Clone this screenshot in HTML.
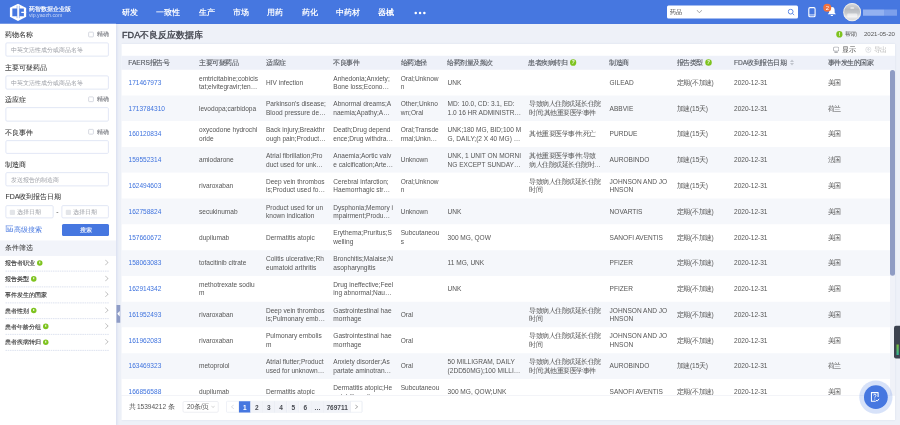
<!DOCTYPE html>
<html><head><meta charset="utf-8">
<style>
*{box-sizing:border-box;margin:0;padding:0}
html,body{width:900px;height:425px;overflow:hidden;background:#eef0f8;font-family:"Liberation Sans",sans-serif;color:#555}
.abs{position:absolute}
#hdr{position:absolute;left:0;top:0;width:900px;height:23.75px;background:#4677e0;box-shadow:inset 0 -0.75px 0 #3b6ddc}
#hdr .nav{position:absolute;top:0.5px;height:23.75px;line-height:23.75px;font-size:8px;color:#fff;font-weight:bold;white-space:nowrap}
#logo-t1{position:absolute;left:29px;top:5px;font-size:6px;line-height:8px;color:#fff;font-weight:bold;white-space:nowrap}
#logo-t2{position:absolute;left:29px;top:12.2px;font-size:5.2px;line-height:6px;color:rgba(255,255,255,.68);white-space:nowrap}
#srch{position:absolute;left:667px;top:5.6px;width:131px;height:12.8px;background:#fff;border-radius:1.5px}
#srch span{position:absolute;left:3px;top:0;line-height:12.8px;font-size:6px;color:#333}
#side{position:absolute;left:0;top:23.75px;width:116px;height:402px;background:#fff;box-shadow:0.5px 0 2.5px rgba(90,110,200,.16)}
.lbl{position:absolute;left:5.4px;font-size:7px;line-height:10px;margin-top:0.4px;color:#333;-webkit-text-stroke:0.05px #333;white-space:nowrap}
.chk{position:absolute;left:88.3px;width:5.4px;height:5.4px;border:0.75px solid #c9ced8;border-radius:1px;background:#fff}
.jq{position:absolute;left:97px;font-size:6.1px;line-height:8px;color:#85878d;-webkit-text-stroke:0.1px #85878d;white-space:nowrap}
.inp{position:absolute;left:5.4px;width:103.3px;height:14.1px;border:0.75px solid #d8dff2;border-radius:1.5px;background:#fff}
.inp span{position:absolute;left:5px;top:0.3px;line-height:12.6px;font-size:6.08px;color:#9c9fa6;white-space:nowrap}
.item{position:absolute;left:0;width:116px;height:15.85px}
.item span{position:absolute;left:5.4px;top:0;line-height:15.85px;font-size:6.1px;color:#333;-webkit-text-stroke:0.12px #333;white-space:nowrap}
.item:after{content:"";position:absolute;left:5.4px;right:7.3px;bottom:-0.6px;border-bottom:0.75px dashed #d2d8ea}
.qi{display:inline-block;position:relative;margin-left:1.5px;vertical-align:-0.8px;width:5.6px;height:5.6px;border-radius:50%;background:#7ec31f}
.qi:after{content:"";position:absolute;left:2.3px;top:1.2px;width:1px;height:2px;background:#fff}
.arr{position:absolute;left:103.5px;top:5.6px;width:4px;height:4px;border-right:0.7px solid #999;border-top:0.7px solid #999;transform:rotate(45deg)}
#main-title{position:absolute;left:122px;top:28px;font-size:9.1px;line-height:13px;color:#3a3d46;-webkit-text-stroke:0.3px #3a3d46;white-space:nowrap}
#card{position:absolute;left:121.5px;top:44px;width:773.5px;height:376px;background:#fff;box-shadow:0 0 2px rgba(160,170,200,.25)}
#thead{position:absolute;left:0;top:11.8px;width:773.5px;height:13.9px;background:#eef1f9}
.th{position:absolute;top:0;line-height:13.9px;font-size:6.6px;color:#54585f;-webkit-text-stroke:0.12px #54585f;white-space:nowrap}
.hq{display:inline-block;position:relative;width:6.4px;height:6.4px;border-radius:50%;background:#7ec31f;vertical-align:-0.9px;margin-left:2.6px;-webkit-text-stroke:0}
.hq:after{content:"?";position:absolute;left:0;top:0;width:6.4px;line-height:6.4px;text-align:center;font-size:4.6px;font-weight:bold;color:#fff}
.sorti{display:inline-block;position:relative;width:4.4px;height:7px;margin-left:3.8px;vertical-align:-1.2px}
.sorti:before{content:"";position:absolute;left:0;top:0.5px;border-left:2.2px solid transparent;border-right:2.2px solid transparent;border-bottom:2.6px solid #c0c4cc}
.sorti:after{content:"";position:absolute;left:0;top:3.9px;border-left:2.2px solid transparent;border-right:2.2px solid transparent;border-top:2.6px solid #c0c4cc}
.row{position:absolute;left:0;width:768.5px;height:25.78px;background:#fff}
.row.s{background:#f5f7fb}
.c{position:absolute;top:0;height:25.78px;display:flex;align-items:center;font-size:6.55px;line-height:8.6px;color:#555;white-space:nowrap}
.c.id{color:#3f73de}
#tbody{position:absolute;left:0;top:25.7px;width:773.5px;height:325.3px;overflow:hidden}
#tbody .row{margin:0}
#sbar{position:absolute;left:768.6px;top:0.3px;width:4.9px;height:205.7px;border-radius:2.5px;background:#8f9cc4}
#strack{position:absolute;left:768.6px;top:0px;width:4.9px;height:325.5px;background:#f0f2f8}
#tline{position:absolute;left:0;top:351.5px;width:773.5px;height:0.6px;background:#e6e9f0}
.pg{position:absolute;top:357.3px;height:11.1px;line-height:12.4px;font-size:6.5px;text-align:center;color:#484b52;background:#f1f3f8;font-weight:bold;box-shadow:inset -0.5px 0 0 #e2e6f0}
#blurw{position:absolute;left:0;top:0;width:900px;height:425px;overflow:hidden;filter:blur(0.3px)}
#wrap{position:absolute;left:0;top:0;width:3600px;height:1700px;transform:scale(0.25);transform-origin:0 0;overflow:hidden}
#page{position:absolute;left:0;top:0;width:900px;height:425px;zoom:4;background:#eef1f8;overflow:hidden}
</style></head><body><div id="blurw"><div id="wrap"><div id="page">
<div id="hdr">
  <svg class="abs" style="left:9.6px;top:3.5px" width="16.8" height="17.8" viewBox="0 0 160 180" preserveAspectRatio="none">
    <path d="M81 3 L160 45 L160 135 L81 177 L3 135 L3 43 Z" fill="#fff"/>
    <path d="M27 50 L72 50 L72 128 L27 128 Z" fill="#4677e0"/>
    <path d="M72 22 V148 M94 22 V148" stroke="#4677e0" stroke-width="4.5"/>
    <path d="M94 50 L137 50 L137 130 L94 130 Z" fill="#4677e0"/>
    <path d="M112 84 L160 84 L160 97 L112 97 Z" fill="#fff"/>
  </svg>
  <div id="logo-t1">药智数据企业版</div>
  <div id="logo-t2">vip.yaozh.com</div>
  <div class="nav" style="left:121.6px">研发</div>
  <div class="nav" style="left:156.2px">一致性</div>
  <div class="nav" style="left:198.9px">生产</div>
  <div class="nav" style="left:233.2px">市场</div>
  <div class="nav" style="left:267px">用药</div>
  <div class="nav" style="left:301.6px">药化</div>
  <div class="nav" style="left:336.4px">中药材</div>
  <div class="nav" style="left:378.4px">器械</div>
  <div class="abs" style="left:414.6px;top:11.8px;width:2.4px;height:2.4px;border-radius:50%;background:#fff;box-shadow:4.3px 0 0 #fff,8.6px 0 0 #fff"></div>
  <div id="srch"><span>药品</span>
    <div class="abs" style="left:30.4px;top:3px;width:3.75px;height:3.75px;border-right:0.6px solid #888;border-bottom:0.6px solid #888;transform:rotate(45deg)"></div>
    <svg class="abs" style="left:120.5px;top:2.9px" width="7.5" height="7" viewBox="0 0 15 14"><circle cx="6.3" cy="6.3" r="4.8" stroke="#4677e0" stroke-width="1.7" fill="none"/><path d="M10 10 L13.5 13.3" stroke="#4677e0" stroke-width="1.7"/></svg>
  </div>
  <svg class="abs" style="left:808px;top:7px" width="8" height="10.6" viewBox="0 0 16 21"><rect x="1.6" y="1.2" width="12.6" height="18.4" rx="2.6" stroke="#fff" stroke-width="2.2" fill="none"/><path d="M2 15.8 H14" stroke="#fff" stroke-width="1.6"/></svg>
  <svg class="abs" style="left:827.3px;top:6.4px" width="9.2" height="10" viewBox="0 0 18 20"><path d="M9 1.2 C4.6 1.2 3.4 4.6 3.4 8 L3.4 12.6 L0.8 15.6 L17.2 15.6 L14.6 12.6 L14.6 8 C14.6 4.6 13.4 1.2 9 1.2 Z" fill="#fff"/><path d="M6.6 16.8 a2.4 2.4 0 0 0 4.8 0 Z" fill="#fff"/></svg>
  <div class="abs" style="left:823.3px;top:3.7px;width:8px;height:8px;border-radius:50%;background:#f0713f;color:#fff;font-size:5.8px;line-height:8.2px;text-align:center">2</div>
  <div class="abs" style="left:843.2px;top:2.9px;width:17.8px;height:18.4px;border-radius:50%;background:linear-gradient(#d9dbde 0%,#b8bbc0 35%,#c4c7cb 55%,#e6e7e9 75%,#d3d5d8 100%);box-shadow:inset 0 0 0 0.9px #ececec;overflow:hidden">
    <div class="abs" style="left:4px;top:10.5px;width:10px;height:4px;border-radius:1px;background:rgba(255,255,255,.55)"></div>
    <div class="abs" style="left:7px;top:4px;width:4px;height:2px;border-radius:1px;background:rgba(255,255,255,.5)"></div>
  </div>
  <div class="abs" style="left:863px;top:9.6px;width:21px;height:6.1px;background:#93b1f0"></div><div class="abs" style="left:884px;top:9.6px;width:13px;height:6.1px;background:#7c9feb"></div>
</div>

<div id="side">
  <div class="lbl" style="top:5.7px">药物名称</div>
  <div class="chk" style="top:8px"></div><div class="jq" style="top:6.5px">精确</div>
  <div class="inp" style="top:18.65px"><span>中英文活性成分或商品名等</span></div>
  <div class="lbl" style="top:38.3px">主要可疑药品</div>
  <div class="inp" style="top:51.75px"><span>中英文活性成分或商品名等</span></div>
  <div class="lbl" style="top:70.5px">适应症</div>
  <div class="chk" style="top:72.8px"></div><div class="jq" style="top:71.3px">精确</div>
  <div class="inp" style="top:83.55px"></div>
  <div class="lbl" style="top:103px">不良事件</div>
  <div class="chk" style="top:105.3px"></div><div class="jq" style="top:103.8px">精确</div>
  <div class="inp" style="top:116.45px;height:13.6px"></div>
  <div class="lbl" style="top:135.2px">制造商</div>
  <div class="inp" style="top:148.45px"><span>发送报告的制造商</span></div>
  <div class="lbl" style="top:167.5px">FDA收到报告日期</div>
  <div class="inp" style="top:181.45px;width:48px;height:13.1px"><span style="left:10.5px;line-height:12px">选择日期</span><i class="abs" style="left:3.5px;top:3.7px;width:5.4px;height:5.4px;background:#e3e5e9;border-radius:1px"></i></div>
  <div class="abs" style="left:56.4px;top:188.6px;width:1.8px;height:0.7px;background:#777"></div>
  <div class="inp" style="top:181.45px;left:61.4px;width:47.3px;height:13.1px"><span style="left:10.5px;line-height:12px">选择日期</span><i class="abs" style="left:3.5px;top:3.7px;width:5.4px;height:5.4px;background:#e3e5e9;border-radius:1px"></i></div>
  <div class="abs" style="left:5.4px;top:201px;font-size:7px;line-height:9px;color:#4677e0;white-space:nowrap"><svg style="display:inline-block;vertical-align:-0.6px;margin-right:0.8px" width="7.6" height="6.8" viewBox="0 0 76 68"><path d="M0 5 H76 M6 5 V64 H70 V30 M24 22 V50 H52 V22" stroke="#4677e0" stroke-width="7" fill="none"/><path d="M30 34 L38 42 L46 34" stroke="#4677e0" stroke-width="6" fill="none"/></svg>高级搜索</div>
  <div class="abs" style="left:62.1px;top:200.25px;width:46.9px;height:12px;border-radius:1.5px;background:#4677e0;color:#fff;font-size:6px;line-height:12px;text-align:center;-webkit-text-stroke:0.1px #fff">搜索</div>
  <div class="abs" style="left:0;top:216.85px;width:116px;height:15.3px;background:#f2f4fa"><span class="abs" style="left:5.4px;top:-0.8px;line-height:15.3px;font-size:7px;color:#333">条件筛选</span></div>
  <div class="item" style="top:231.25px"><span>报告者职业<i class="qi"></i></span><b class="arr"></b></div><div class="item" style="top:247.10px"><span>报告类型<i class="qi"></i></span><b class="arr"></b></div><div class="item" style="top:262.95px"><span>事件发生的国家</span><b class="arr"></b></div><div class="item" style="top:278.80px"><span>患者性别<i class="qi"></i></span><b class="arr"></b></div><div class="item" style="top:294.65px"><span>患者年龄分组<i class="qi"></i></span><b class="arr"></b></div><div class="item" style="top:310.50px"><span>患者疾病转归<i class="qi"></i></span><b class="arr"></b></div>
</div>
<div class="abs" style="left:116.5px;top:304.9px;width:3.8px;height:17.9px;background:#8e9cc6"><i class="abs" style="left:0.7px;top:6.1px;width:0;height:0;border-top:2.8px solid transparent;border-bottom:2.8px solid transparent;border-right:2.7px solid #fff"></i></div>

<div id="main-title">FDA不良反应数据库</div>
<div class="abs" style="left:836.2px;top:31.1px;width:6.4px;height:6.4px;border-radius:50%;background:#7ec31f"><i class="abs" style="left:2.75px;top:1.2px;width:0.9px;height:2.4px;background:#fff"></i><i class="abs" style="left:2.75px;top:4.1px;width:0.9px;height:0.9px;background:#fff"></i></div>
<div class="abs" style="left:845.3px;top:30px;font-size:6.1px;line-height:8px;color:#555;white-space:nowrap">帮助</div>
<div class="abs" style="left:863.9px;top:30px;font-size:6.08px;line-height:8px;color:#555;white-space:nowrap">2021-05-20</div>

<div id="card">
  <svg class="abs" style="left:711.4px;top:2.6px" width="6.2" height="6.4" viewBox="0 0 12 12.4"><rect x="0.9" y="0.9" width="10.2" height="8.2" rx="2.6" stroke="#8a8d94" stroke-width="1.3" fill="none"/><path d="M2.8 11.4 h6.4" stroke="#8a8d94" stroke-width="1.5"/></svg>
  <div class="abs" style="left:720.9px;top:1px;font-size:6.6px;line-height:9px;color:#555;white-space:nowrap">显示</div>
  <svg class="abs" style="left:743.8px;top:2.6px" width="6.2" height="6.4" viewBox="0 0 12 12.4"><circle cx="6" cy="6.2" r="5.3" stroke="#c3c6cc" stroke-width="1" fill="none"/><path d="M3.3 6.6 L6 3.6 L8.7 6.6" stroke="#c3c6cc" stroke-width="1" fill="none"/><path d="M6 3.8 V9" stroke="#c3c6cc" stroke-width="1"/></svg>
  <div class="abs" style="left:752.4px;top:1px;font-size:6.6px;line-height:9px;color:#bbb;white-space:nowrap">导出</div>
  <div id="thead">
    <div class="th" style="left:6.8px">FAERS报告号</div>
    <div class="th" style="left:77.5px">主要可疑药品</div>
    <div class="th" style="left:144.5px">适应症</div>
    <div class="th" style="left:211.8px">不良事件</div>
    <div class="th" style="left:279.2px">给药途径</div>
    <div class="th" style="left:325.8px">给药剂量及频次</div>
    <div class="th" style="left:406.8px">患者疾病转归<i class="hq"></i></div>
    <div class="th" style="left:487.8px">制造商</div>
    <div class="th" style="left:555.2px">报告类型<i class="hq"></i></div>
    <div class="th" style="left:612.5px">FDA收到报告日期<i class="sorti"></i></div>
    <div class="th" style="left:706.2px">事件发生的国家</div>
  </div>
  <div id="tbody">
<div class="row" style="top:0.00px"><div class="c id" style="left:7.00px"><div>171467973</div></div><div class="c" style="left:77.50px"><div>emtricitabine;cobicis<br>tat;elvitegravir;ten…</div></div><div class="c" style="left:144.50px"><div>HIV infection</div></div><div class="c" style="left:211.80px"><div>Anhedonia;Anxiety;<br>Bone loss;Econo…</div></div><div class="c" style="left:279.20px"><div>Oral;Unknow<br>n</div></div><div class="c" style="left:326.10px"><div>UNK</div></div><div class="c" style="left:488.10px"><div>GILEAD</div></div><div class="c" style="left:555.40px"><div>定期(不加速)</div></div><div class="c" style="left:612.50px"><div>2020-12-31</div></div><div class="c" style="left:706.40px"><div>美国</div></div></div>
<div class="row s" style="top:25.78px"><div class="c id" style="left:7.00px"><div>1713784310</div></div><div class="c" style="left:77.50px"><div>levodopa;carbidopa</div></div><div class="c" style="left:144.50px"><div>Parkinson's disease;<br>Blood pressure de…</div></div><div class="c" style="left:211.80px"><div>Abnormal dreams;A<br>naemia;Apathy;A…</div></div><div class="c" style="left:279.20px"><div>Other;Unkno<br>wn;Oral</div></div><div class="c" style="left:326.10px"><div>MD: 10.0, CD: 3.1, ED:<br>1.0 16 HR ADMINISTR…</div></div><div class="c" style="left:407.50px"><div>导致病人住院或延长住院<br>时间;其他重要医学事件</div></div><div class="c" style="left:488.10px"><div>ABBVIE</div></div><div class="c" style="left:555.40px"><div>加速(15天)</div></div><div class="c" style="left:612.50px"><div>2020-12-31</div></div><div class="c" style="left:706.40px"><div>荷兰</div></div></div>
<div class="row" style="top:51.56px"><div class="c id" style="left:7.00px"><div>160120834</div></div><div class="c" style="left:77.50px"><div>oxycodone hydrochl<br>oride</div></div><div class="c" style="left:144.50px"><div>Back injury;Breakthr<br>ough pain;Product…</div></div><div class="c" style="left:211.80px"><div>Death;Drug depend<br>ence;Drug withdra…</div></div><div class="c" style="left:279.20px"><div>Oral;Transde<br>rmal;Unkn…</div></div><div class="c" style="left:326.10px"><div>UNK;180 MG, BID;100 M<br>G, DAILY;(2 X 40 MG) …</div></div><div class="c" style="left:407.50px"><div>其他重要医学事件;死亡</div></div><div class="c" style="left:488.10px"><div>PURDUE</div></div><div class="c" style="left:555.40px"><div>加速(15天)</div></div><div class="c" style="left:612.50px"><div>2020-12-31</div></div><div class="c" style="left:706.40px"><div>美国</div></div></div>
<div class="row s" style="top:77.34px"><div class="c id" style="left:7.00px"><div>159552314</div></div><div class="c" style="left:77.50px"><div>amiodarone</div></div><div class="c" style="left:144.50px"><div>Atrial fibrillation;Pro<br>duct used for unk…</div></div><div class="c" style="left:211.80px"><div>Anaemia;Aortic valv<br>e calcification;Arte…</div></div><div class="c" style="left:279.20px"><div>Unknown</div></div><div class="c" style="left:326.10px"><div>UNK, 1 UNIT ON MORNI<br>NG EXCEPT SUNDAY…</div></div><div class="c" style="left:407.50px"><div>其他重要医学事件;导致<br>病人住院或延长住院时…</div></div><div class="c" style="left:488.10px"><div>AUROBINDO</div></div><div class="c" style="left:555.40px"><div>加速(15天)</div></div><div class="c" style="left:612.50px"><div>2020-12-31</div></div><div class="c" style="left:706.40px"><div>法国</div></div></div>
<div class="row" style="top:103.12px"><div class="c id" style="left:7.00px"><div>162494603</div></div><div class="c" style="left:77.50px"><div>rivaroxaban</div></div><div class="c" style="left:144.50px"><div>Deep vein thrombos<br>is;Product used fo…</div></div><div class="c" style="left:211.80px"><div>Cerebral infarction;<br>Haemorrhagic str…</div></div><div class="c" style="left:279.20px"><div>Oral;Unknow<br>n</div></div><div class="c" style="left:407.50px"><div>导致病人住院或延长住院<br>时间</div></div><div class="c" style="left:488.10px"><div>JOHNSON AND JO<br>HNSON</div></div><div class="c" style="left:555.40px"><div>加速(15天)</div></div><div class="c" style="left:612.50px"><div>2020-12-31</div></div><div class="c" style="left:706.40px"><div>美国</div></div></div>
<div class="row s" style="top:128.90px"><div class="c id" style="left:7.00px"><div>162758824</div></div><div class="c" style="left:77.50px"><div>secukinumab</div></div><div class="c" style="left:144.50px"><div>Product used for un<br>known indication</div></div><div class="c" style="left:211.80px"><div>Dysphonia;Memory i<br>mpairment;Produ…</div></div><div class="c" style="left:279.20px"><div>Unknown</div></div><div class="c" style="left:326.10px"><div>UNK</div></div><div class="c" style="left:488.10px"><div>NOVARTIS</div></div><div class="c" style="left:555.40px"><div>定期(不加速)</div></div><div class="c" style="left:612.50px"><div>2020-12-31</div></div><div class="c" style="left:706.40px"><div>美国</div></div></div>
<div class="row" style="top:154.68px"><div class="c id" style="left:7.00px"><div>157660672</div></div><div class="c" style="left:77.50px"><div>dupilumab</div></div><div class="c" style="left:144.50px"><div>Dermatitis atopic</div></div><div class="c" style="left:211.80px"><div>Erythema;Pruritus;S<br>welling</div></div><div class="c" style="left:279.20px"><div>Subcutaneou<br>s</div></div><div class="c" style="left:326.10px"><div>300 MG, QOW</div></div><div class="c" style="left:488.10px"><div>SANOFI AVENTIS</div></div><div class="c" style="left:555.40px"><div>定期(不加速)</div></div><div class="c" style="left:612.50px"><div>2020-12-31</div></div><div class="c" style="left:706.40px"><div>美国</div></div></div>
<div class="row s" style="top:180.46px"><div class="c id" style="left:7.00px"><div>158063083</div></div><div class="c" style="left:77.50px"><div>tofacitinib citrate</div></div><div class="c" style="left:144.50px"><div>Colitis ulcerative;Rh<br>eumatoid arthritis</div></div><div class="c" style="left:211.80px"><div>Bronchitis;Malaise;N<br>asopharyngitis</div></div><div class="c" style="left:326.10px"><div>11 MG, UNK</div></div><div class="c" style="left:488.10px"><div>PFIZER</div></div><div class="c" style="left:555.40px"><div>定期(不加速)</div></div><div class="c" style="left:612.50px"><div>2020-12-31</div></div><div class="c" style="left:706.40px"><div>美国</div></div></div>
<div class="row" style="top:206.24px"><div class="c id" style="left:7.00px"><div>162914342</div></div><div class="c" style="left:77.50px"><div>methotrexate sodiu<br>m</div></div><div class="c" style="left:211.80px"><div>Drug ineffective;Feel<br>ing abnormal;Nau…</div></div><div class="c" style="left:326.10px"><div>UNK</div></div><div class="c" style="left:488.10px"><div>PFIZER</div></div><div class="c" style="left:555.40px"><div>定期(不加速)</div></div><div class="c" style="left:612.50px"><div>2020-12-31</div></div><div class="c" style="left:706.40px"><div>美国</div></div></div>
<div class="row s" style="top:232.02px"><div class="c id" style="left:7.00px"><div>161952493</div></div><div class="c" style="left:77.50px"><div>rivaroxaban</div></div><div class="c" style="left:144.50px"><div>Deep vein thrombos<br>is;Pulmonary emb…</div></div><div class="c" style="left:211.80px"><div>Gastrointestinal hae<br>morrhage</div></div><div class="c" style="left:279.20px"><div>Oral</div></div><div class="c" style="left:407.50px"><div>导致病人住院或延长住院<br>时间</div></div><div class="c" style="left:488.10px"><div>JOHNSON AND JO<br>HNSON</div></div><div class="c" style="left:555.40px"><div>定期(不加速)</div></div><div class="c" style="left:612.50px"><div>2020-12-31</div></div><div class="c" style="left:706.40px"><div>美国</div></div></div>
<div class="row" style="top:257.80px"><div class="c id" style="left:7.00px"><div>161962083</div></div><div class="c" style="left:77.50px"><div>rivaroxaban</div></div><div class="c" style="left:144.50px"><div>Pulmonary embolis<br>m</div></div><div class="c" style="left:211.80px"><div>Gastrointestinal hae<br>morrhage</div></div><div class="c" style="left:279.20px"><div>Oral</div></div><div class="c" style="left:407.50px"><div>导致病人住院或延长住院<br>时间</div></div><div class="c" style="left:488.10px"><div>JOHNSON AND JO<br>HNSON</div></div><div class="c" style="left:555.40px"><div>定期(不加速)</div></div><div class="c" style="left:612.50px"><div>2020-12-31</div></div><div class="c" style="left:706.40px"><div>美国</div></div></div>
<div class="row s" style="top:283.58px"><div class="c id" style="left:7.00px"><div>163469323</div></div><div class="c" style="left:77.50px"><div>metoprolol</div></div><div class="c" style="left:144.50px"><div>Atrial flutter;Product<br>used for unknown…</div></div><div class="c" style="left:211.80px"><div>Anxiety disorder;As<br>partate aminotran…</div></div><div class="c" style="left:279.20px"><div>Oral</div></div><div class="c" style="left:326.10px"><div>50 MILLIGRAM, DAILY<br>(2DD50MG);100 MILLI…</div></div><div class="c" style="left:407.50px"><div>导致病人住院或延长住院<br>时间;其他重要医学事件</div></div><div class="c" style="left:488.10px"><div>AUROBINDO</div></div><div class="c" style="left:555.40px"><div>加速(15天)</div></div><div class="c" style="left:612.50px"><div>2020-12-31</div></div><div class="c" style="left:706.40px"><div>荷兰</div></div></div>
<div class="row" style="top:309.36px"><div class="c id" style="left:7.00px"><div>166856588</div></div><div class="c" style="left:77.50px"><div>dupilumab</div></div><div class="c" style="left:144.50px"><div>Dermatitis atopic</div></div><div class="c" style="left:211.80px"><div>Dermatitis atopic;He<br>patobiliary dise…</div></div><div class="c" style="left:279.20px"><div>Subcutaneou<br>s</div></div><div class="c" style="left:326.10px"><div>300 MG, QOW;UNK</div></div><div class="c" style="left:488.10px"><div>SANOFI AVENTIS</div></div><div class="c" style="left:555.40px"><div>定期(不加速)</div></div><div class="c" style="left:612.50px"><div>2020-12-31</div></div><div class="c" style="left:706.40px"><div>美国</div></div></div>
  <div id="strack"></div>
  <div id="sbar"></div>
  </div>
  <div id="tline"></div>
  <div class="abs" style="left:7.1px;top:357.5px;font-size:6.55px;line-height:10px;color:#555;white-space:nowrap">共 15394212 条</div>
  <div class="abs" style="left:61.2px;top:357.3px;width:35.7px;height:11.1px;border:0.6px solid #dcdfe6;border-radius:1.5px;font-size:6.5px;line-height:10px;color:#555;padding-left:3.7px;white-space:nowrap">20条/页<i class="abs" style="left:28.5px;top:3px;width:2.6px;height:2.6px;border-right:0.6px solid #bbb;border-bottom:0.6px solid #bbb;transform:rotate(45deg)"></i></div>
  <div class="abs" style="left:104.7px;top:357px;width:136.3px;height:11.4px;border:0.5px solid #dfe3ee;border-radius:1px;background:#fff"></div>
  <div class="pg" style="left:105.2px;width:12.2px;background:transparent"><svg class="abs" style="left:4.1px;top:3.2px" width="3.6" height="4.6" viewBox="0 0 7 9"><path d="M6 0.7 L1.3 4.5 L6 8.3" stroke="#c0c4cc" stroke-width="1.1" fill="none"/></svg></div>
  <div class="pg" style="left:117.6px;width:11.5px;background:#4677e0;color:#fff">1</div>
  <div class="pg" style="left:129.3px;width:11.8px">2</div>
  <div class="pg" style="left:141.3px;width:12px">3</div>
  <div class="pg" style="left:153.5px;width:12px">4</div>
  <div class="pg" style="left:165.7px;width:12px">5</div>
  <div class="pg" style="left:177.9px;width:12px">6</div>
  <div class="pg" style="left:190.1px;width:12px">…</div>
  <div class="pg" style="left:202.3px;width:26.6px">769711</div>
  <div class="pg" style="left:229.1px;width:11.6px;background:transparent"><svg class="abs" style="left:4.1px;top:3.2px" width="3.6" height="4.6" viewBox="0 0 7 9"><path d="M1 0.7 L5.7 4.5 L1 8.3" stroke="#666" stroke-width="1.1" fill="none"/></svg></div>
</div>

<div class="abs" style="left:859.2px;top:380.4px;width:33.4px;height:33.4px;border-radius:50%;background:rgba(110,150,235,.28)"></div>
<div class="abs" style="left:864px;top:385.2px;width:23.8px;height:23.8px;border-radius:50%;background:#4677e0">
  <svg class="abs" style="left:6.6px;top:6.6px" width="9" height="10.4" viewBox="0 0 18 20.8"><path d="M10.5 19 H1.8 V1.8 H15.2 V10.5" stroke="#fff" stroke-width="2.2" fill="none" stroke-linejoin="round"/><path d="M6.2 7.2 C6.2 4.2 11 4.2 11 7.2 C11 9.2 8.6 9.2 8.6 11.6" stroke="#fff" stroke-width="1.9" fill="none"/><circle cx="8.6" cy="14.6" r="1.1" fill="#fff"/><path d="M11 16.5 L13.2 18.8 L17.6 13.8" stroke="#fff" stroke-width="2" fill="none"/></svg>
</div>
<div class="abs" style="left:894px;top:325.7px;width:7px;height:32.9px;border-radius:2px 0 0 2px;background:#3d4350"><i class="abs" style="left:2.4px;top:18.9px;width:2.3px;height:10.4px;background:linear-gradient(#7fbf3a,#2fb59a)"></i></div>
</div></div></div></body></html>
